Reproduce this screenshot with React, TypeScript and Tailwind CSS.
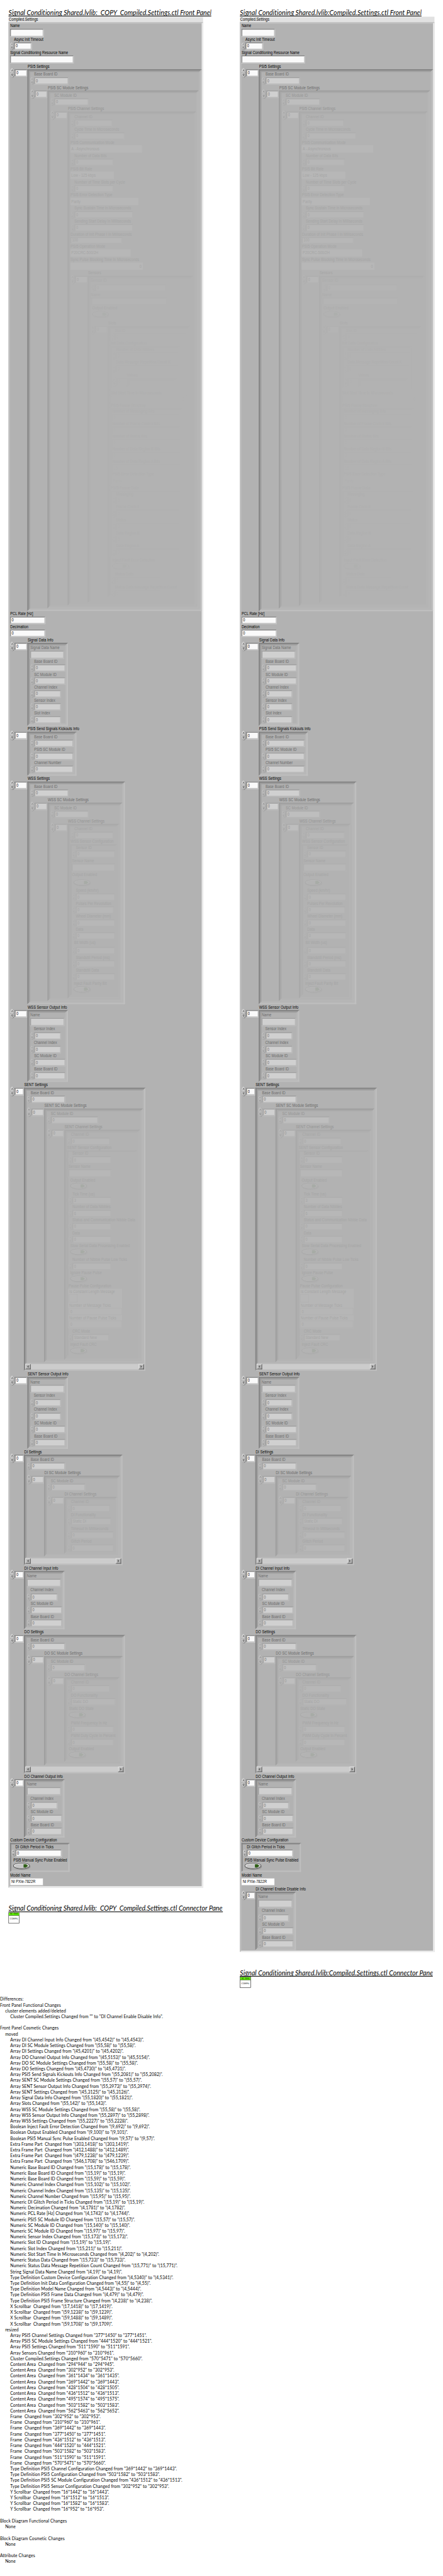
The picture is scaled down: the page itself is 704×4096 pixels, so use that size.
import React from "react";

type Kind = "num" | "plain" | "str" | "ring" | "flat" | "check" | "bool" | "array" | "cluster" | "group" | "model";

interface Item {
  kind: Kind;
  label: string;
  /** vertical position of the control's own box; its caption sits above it */
  top: number;
  h: number;
  w: number;
  /** left inset of the control inside its parent */
  x: number;
  /** left inset of the caption */
  lx: number;
  captionH: number;
  value?: string;
  right?: boolean;
  indexW?: number;
  scroll?: boolean;
  kids?: Item[];
}

type Extra = Partial<Item>;

const base = (kind: Kind, label: string, top: number, h: number, w: number, extra: Extra): Item => ({
  kind, label, top, h, w, x: 0, lx: 1, captionH: 16, ...extra,
});
const num = (label: string, top: number, w: number, extra: Extra = {}) =>
  base("num", label, top, 22, w, { value: "0", lx: (extra.x ?? 0) + 12, ...extra });
const plain = (label: string, top: number, w: number, extra: Extra = {}) =>
  base("plain", label, top, 22, w, { value: "0", ...extra });
const str = (label: string, top: number, w: number, extra: Extra = {}) => base("str", label, top, 24, w, extra);
const ring = (label: string, top: number, w: number, value: string, extra: Extra = {}) =>
  base("ring", label, top, 22, w, { value, ...extra });
const bool = (label: string, top: number, x: number, extra: Extra = {}) =>
  base("bool", label, top, 22, 52, { x, lx: x + 1, ...extra });
const array = (label: string, top: number, w: number, h: number, kids: Item[], extra: Extra = {}) =>
  base("array", label, top, h, w, { indexW: 37, lx: 52, kids, ...extra });
const cluster = (label: string, top: number, w: number, h: number, kids: Item[], extra: Extra = {}) =>
  base("cluster", label, top, h, w, { kids, ...extra });

const narrow: Extra = { indexW: 27, lx: 42 };

const slots = (): Item[] => [
  num("Slot ID", 977, 211),
  cluster("Init Data Configuration", 1015, 202, 125, [
    num("Number of Data Nibbles", 1033, 183),
    num("Data Message Repetition Count K", 1071, 183),
    array("Values", 1109, 146, 26, [], { indexW: 30, lx: 44 }),
  ]),
  plain("Slot Start Time In Microseconds", 1160, 222, { right: true }),
  cluster("PSI5 Frame Structure", 1197, 210, 226, [
    plain("Number of Messaging Bits", 1214, 200),
    plain("Number of Frame Control Bits", 1251, 200),
    plain("Number of Status Bits", 1288, 200),
    plain("Number of Data Region B Bits", 1325, 200),
    plain("Number of Data Region A Bits", 1362, 200, { value: "10" }),
    ring("PSI5 Error Detection Type", 1399, 200, "Parity"),
  ]),
  cluster("PSI5 Frame Data", 1439, 206, 195, [
    num("Messaging", 1457, 188),
    num("Frame Control", 1495, 188),
    num("Status", 1533, 188),
    num("Data Region B", 1571, 188),
    num("Data Region A", 1609, 188),
  ]),
  bool("Inject Fault Error Detection", 1651, 4),
  num("Status Data", 1692, 136),
  num("Status Data Message Repetition Count", 1730, 136),
];

const psi5 = (grow: number) =>
  array("PSI5 Settings", 203, 511, 1589 + grow, [
    num("Base Board ID", 226, 102),
    array("PSI5 SC Module Settings", 265, 443, 1519 + grow, [
      num("SC Module ID", 288, 102),
      array("PSI5 Channel Settings", 327, 376, 1449 + grow, [
        num("Channel ID", 350, 113),
        num("Cycle Time in Microseconds", 388, 149),
        ring("PSI5 Communication Mode", 426, 210, "A - Asynchronous"),
        num("Number of Data Bits", 465, 116),
        ring("PSI5 Bit Rate", 503, 128, "Low - 125 kbps"),
        num("Number of Time Slots per Cycle", 542, 116),
        ring("PSI5 Error Detection Type", 580, 200, "Parity"),
        num("Sync Sustain Time in Microseconds", 619, 173),
        num("Sending Start Delay In Milliseconds", 657, 173),
        plain("Duration of Init Phase I In Milliseconds", 695, 153, { value: "100", h: 20 }),
        ring("PSI5 Operation Mode", 731, 177, "P20CRC-500/2H"),
        ring("Sync Pulse Blocking Time In Microseconds", 770, 213, "0", { right: true }),
        array("Sensors", 809, 308, 959 + grow, [
          num("Sensor ID", 833, 209, { x: 2, lx: 1, captionH: 18 }),
          str("Name", 872, 222, { x: 2, h: 22 }),
          bool("Output Enabled", 912, 4),
          array("Slots", 956, 241, 795 + grow, slots()),
        ]),
      ]),
    ]),
  ]);

const sensorInfo = (label: string, t: number) =>
  array(label, t, 119, 211, [
    str("Name", t + 23, 101),
    num("Sensor Index", t + 65, 80, { captionH: 18, lx: 11 }),
    num("Channel Index", t + 105, 80, { captionH: 18, lx: 11 }),
    num("SC Module ID", t + 143, 93),
    num("Base Board ID", t + 182, 93),
  ]);

const channelInfo = (label: string, t: number) =>
  array(label, t, 119, 171, [
    str("Name", t + 23, 101),
    num("Channel Index", t + 66, 80, { captionH: 18, lx: 11 }),
    num("SC Module ID", t + 104, 93),
    num("Base Board ID", t + 142, 93),
  ], narrow);

const panelItems = (grow: number): Item[] => [
  str("Name", 84, 99),
  num("Async Init Timeout", 124, 53),
  str("Signal Conditioning Resource Name", 162, 187),
  psi5(grow),
  plain("PCL Rate [Hz]", 1808, 104),
  plain("Decimation", 1846, 104),
  array("Signal Data Info", 1885, 119, 244, [
    str("Signal Data Name", 1908, 100),
    num("Base Board ID", 1948, 93),
    num("SC Module ID", 1986, 93),
    num("Channel Index", 2024, 80),
    num("Sensor Index", 2062, 80),
    num("Slot Index", 2100, 80),
  ]),
  array("PSI5 Send Signals Kickouts Info", 2146, 144, 129, [
    num("Base Board ID", 2169, 116),
    num("PSI5 SC Module ID", 2207, 116),
    num("Channel Number", 2245, 116),
  ]),
  array("WSS Settings", 2292, 286, 653, [
    num("Base Board ID", 2315, 102),
    array("WSS SC Module Settings", 2354, 219, 582, [
      num("SC Module ID", 2377, 102),
      array("WSS Channel Settings", 2416, 151, 512, [
        num("Channel ID", 2439, 116),
        cluster("WSS Sensor Configuration", 2476, 136, 444, [
          num("Sensor ID", 2494, 116),
          str("Sensor Name", 2532, 127),
          bool("Output Enabled", 2579, 5, { captionH: 22, lx: 1 }),
          num("Speed (km/hr)", 2620, 116),
          num("Pulses Per Revolution", 2658, 113),
          num("Wheel Diameter (mm)", 2696, 116),
          num("Data", 2734, 116),
          num("Bit Width (us)", 2777, 116, { captionH: 21, lx: 7 }),
          num("Standstill Period (ms)", 2816, 116),
          num("Standstill Data", 2854, 116),
          bool("Inject Fault Parity Bit", 2892, 5),
        ]),
      ]),
    ]),
  ]),
  sensorInfo("WSS Sensor Output Info", 2962),
  array("SENT Settings", 3190, 356, 830, [
    num("Base Board ID", 3213, 102),
    array("SENT SC Module Settings", 3251, 290, 744, [
      num("SC Module ID", 3274, 140),
      array("SENT Channel Settings", 3313, 222, 675, [
        num("Channel ID", 3336, 116),
        cluster("SENT Sensor Configuration", 3374, 205, 604, [
          num("Sensor ID", 3391, 116),
          str("Sensor Name", 3429, 127),
          bool("Output Enabled", 3469, 5),
          num("Tick Time (us)", 3510, 116, { value: "3" }),
          num("Number of Data Nibbles", 3548, 116, { value: "6" }),
          num("Status and Communication Nibble Data", 3586, 116),
          num("Data", 3624, 116),
          bool("Slow Serial Data Processing Enabled", 3662, 5),
          num("Number of Nibble Pulse Low Ticks", 3703, 116),
          bool("Ignore Pause Pulse", 3741, 5),
          base("group", "Pause Pulse Configuration", 3780, 115, 158, {
            kids: [
              base("check", "Is Constant Length Message", 3796, 24, 25, {}),
              base("flat", "Number of Message Ticks", 3836, 21, 155, { value: "0" }),
              base("flat", "Number of Pause Pulse Ticks", 3873, 21, 155, { value: "0" }),
            ],
          }),
          num("CRC Mode", 3912, 109, { value: "Standard New" }),
          bool("Inject Fault CRC", 3952, 5),
        ]),
      ]),
    ]),
  ], { ...narrow, scroll: true }),
  sensorInfo("SENT Sensor Output Info", 4038),
  array("DI Settings", 4266, 289, 324, [
    num("Base Board ID", 4289, 102),
    array("DI SC Module Settings", 4328, 222, 237, [
      num("SC Module ID", 4351, 102),
      array("DI Channel Settings", 4390, 155, 167, [
        num("Channel ID", 4413, 116),
        num("DI Functionality", 4451, 120, { value: "Static DI" }),
        num("Timeout In Milliseconds", 4491, 127),
        num("Glitch Period", 4529, 127),
      ]),
    ]),
  ], { ...narrow, scroll: true }),
  channelInfo("DI Channel Input Info", 4607),
  array("DO Settings", 4795, 296, 406, [
    num("Base Board ID", 4818, 102),
    array("DO SC Module Settings", 4857, 230, 321, [
      num("SC Module ID", 4880, 102),
      array("DO Channel Settings", 4919, 162, 248, [
        num("Channel ID", 4942, 116),
        num("DO Functionality", 4980, 132, { value: "Static DO" }),
        bool("Static DO State", 5020, 5),
        num("PWM Frequency In Hz", 5061, 127),
        num("PWM Duty Cycle In Percent", 5099, 127),
        bool("Output Enabled", 5137, 5),
      ]),
    ]),
  ], { ...narrow, scroll: true }),
  channelInfo("DO Channel Output Info", 5218),
  cluster("Custom Device Configuration", 5405, 175, 85, [
    num("DI Glitch Period in Ticks", 5424, 137),
    bool("PSI5 Manual Sync Pulse Enabled", 5463, 5),
  ]),
  base("model", "Model Name", 5508, 22, 98, { value: "NI PXIe-7822R" }),
];

const bevel = "border-3 border-t-[#868686] border-l-[#8c8c8c] border-r-[#bfbfbf] border-b-[#c1c1c1]";
const frame = "border-4 border-t-[#858585] border-l-[#858585] border-r-[#bfbfbf] border-b-[#bfbfbf]";

function Caption({ text }: { text: string }) {
  return (
    <span className="block h-4 w-max origin-left scale-x-[0.842] text-[12.5px] leading-4 whitespace-pre">{text}</span>
  );
}

function Spinner({ w, h }: { w: number; h: number }) {
  return (
    <svg width={w} height={h} viewBox="0 0 14 28" preserveAspectRatio="none" className="shrink-0">
      <ellipse cx="7.5" cy="14.5" rx="6.3" ry="13.2" fill="#6e6e6e" />
      <ellipse cx="6.6" cy="13.6" rx="6.2" ry="13.2" fill="#c6c6c6" />
      <ellipse cx="5.6" cy="11" rx="3.8" ry="8.5" fill="#d6d6d6" />
      <path d="M0.8 13.8H12.8" stroke="#8a8a8a" strokeWidth="1.2" />
      <path d="M4.4 10.5L6.8 5L9.2 10.5" fill="none" stroke="#555555" strokeWidth="1.3" />
      <path d="M4.4 17.5H9.2L6.8 23Z" fill="none" stroke="#555555" strokeWidth="1.3" />
    </svg>
  );
}

function Toggle() {
  return (
    <svg width="52" height="22" viewBox="0 0 52 22">
      <ellipse cx="27.5" cy="12" rx="24" ry="9" fill="#8b8b8b" opacity="0.7" />
      <ellipse cx="25" cy="9.2" rx="24.5" ry="9" fill="#4a4a4a" />
      <ellipse cx="25" cy="9" rx="22.8" ry="7.4" fill="#d9d9d9" />
      <ellipse cx="26" cy="10" rx="20" ry="5.8" fill="#c6c6c6" />
      <path d="M31 4.5H38L44 9.2L38 14H31Z" fill="#2f5f17" />
    </svg>
  );
}

function Field({ item, h, w }: { item: { value?: string; right?: boolean }; h: number; w: number }) {
  return (
    <div style={{ width: w, height: h }} className={`flex shrink-0 items-center bg-[#fafafa] ${bevel} ${item.right ? "justify-end" : ""}`}>
      {item.value && <span className="px-[2px]"><Caption text={item.value} /></span>}
    </div>
  );
}

function ScrollBar() {
  return (
    <div className="flex h-4 w-full justify-between bg-[#cccccc]">
      <div className="flex h-4 w-4 items-center justify-center border-2 border-t-[#e4e4e4] border-r-[#5c5c5c] border-b-[#5c5c5c] border-l-[#e4e4e4] bg-[#b8b8b8]">
        <svg width="6" height="8"><path d="M5 0V8L0.5 4Z" fill="#5f5f5f" /></svg>
      </div>
      <div className="flex h-4 w-4 items-center justify-center border-2 border-t-[#e4e4e4] border-r-[#5c5c5c] border-b-[#5c5c5c] border-l-[#e4e4e4] bg-[#b8b8b8]">
        <svg width="6" height="8"><path d="M1 0V8L5.5 4Z" fill="#5f5f5f" /></svg>
      </div>
    </div>
  );
}

function Control({ item }: { item: Item }) {
  const { kind, w, h, kids = [] } = item;
  if (kind === "num") {
    return (
      <div className="flex">
        <Spinner w={12} h={22} />
        <Field item={item} h={h} w={w - 1} />
      </div>
    );
  }
  if (kind === "plain" || kind === "str") return <Field item={item} h={h} w={w} />;
  if (kind === "ring") {
    return (
      <div style={{ width: w, height: h }} className={`flex items-center bg-[#fafafa] px-[3px] ${item.right ? "justify-end" : ""}`}>
        <Caption text={item.value ?? ""} />
      </div>
    );
  }
  if (kind === "model") {
    return (
      <div style={{ width: w, height: h }} className="flex items-center border border-[#999999] bg-white px-[3px]">
        <Caption text={item.value ?? ""} />
      </div>
    );
  }
  if (kind === "flat" || kind === "check") {
    return (
      <div style={{ width: w, height: h }} className="flex items-center border border-[#7a7a7a] px-[3px]">
        <Caption text={item.value ?? ""} />
      </div>
    );
  }
  if (kind === "bool") return <Toggle />;
  if (kind === "cluster") {
    return (
      <div style={{ width: w, height: h }} className={frame}>
        <Stack items={kids} from={item.top + 4} />
      </div>
    );
  }
  if (kind === "group") {
    return (
      <div style={{ width: w, height: h }} className="bg-[#f6f6f6] pl-[2px]">
        <Stack items={kids} from={item.top} />
      </div>
    );
  }
  return (
    <div style={{ height: h }} className="flex items-start">
      <div className="-mt-1 flex items-start">
        <Spinner w={14} h={29} />
        <div className="pt-1">
          <Field item={{ value: "0" }} h={22} w={item.indexW ?? 37} />
        </div>
      </div>
      <div style={{ width: w, height: h }} className={`flex flex-col ${frame}`}>
        <div className={`min-h-0 flex-1 opacity-[0.42] ${frame}`}>
          <Stack items={kids} from={item.top + 8} />
        </div>
        {item.scroll && <ScrollBar />}
      </div>
    </div>
  );
}

/** Column of captioned controls; the gaps follow from the controls' vertical positions. */
function Stack({ items, from }: { items: Item[]; from: number }) {
  let end = from;
  return (
    <div className="flex flex-col items-start">
      {items.map((item, i) => {
        const gap = item.top - item.captionH - end;
        end = item.top + item.h;
        return (
          <div key={i} style={{ marginTop: gap, height: item.captionH + item.h }} className="flex flex-col items-start">
            <div style={{ height: item.captionH, paddingLeft: item.lx }}>
              <Caption text={item.label} />
            </div>
            <div style={{ paddingLeft: item.x }}>
              <Control item={item} />
            </div>
          </div>
        );
      })}
    </div>
  );
}

function Title({ text, w, spacing }: { text: string; w: number; spacing: number }) {
  return (
    <h2
      style={{ width: w, letterSpacing: spacing }}
      className="h-[23px] overflow-hidden border-b-2 border-black font-['Lato',sans-serif] text-[19.5px] leading-[24px] whitespace-pre italic"
    >
      {text}
    </h2>
  );
}

function Panel({ items, h }: { items: Item[]; h: number }) {
  return (
    <section className="mt-px w-[570px]">
      <div className="h-4 bg-[#e1e1e1] pl-px">
        <Caption text="Compiled.Settings" />
      </div>
      <div
        style={{ height: h }}
        className="overflow-hidden border-4 border-t-[#c4c4c4] border-r-[#efefef] border-b-[#efefef] border-l-[#c0c0c0] bg-[#b2b2b2]"
      >
        <Stack items={items} from={69} />
      </div>
    </section>
  );
}

function ViIcon() {
  return (
    <div className="mt-px flex h-8 w-8 flex-col border border-black bg-white text-center font-['DejaVu_Sans',sans-serif] text-[6.5px] tracking-tight whitespace-nowrap">
      <div className="h-2 border-b border-black bg-[#66ff00] leading-[7px]">SC SHA</div>
      <div className="flex flex-1 items-center justify-center">COMPIL</div>
    </div>
  );
}

const T = "\t";
const report = `Differences:
Front Panel Functional Changes
${T}cluster elements added/deleted
${T}${T}Cluster Compiled.Settings Changed from "" to "DI Channel Enable Disable Info".

Front Panel Cosmetic Changes
${T}moved
${T}${T}Array DI Channel Input Info Changed from "(45,4542)" to "(45,4543)".
${T}${T}Array DI SC Module Settings Changed from "(55,58)" to "(55,58)".
${T}${T}Array DI Settings Changed from "(45,4201)" to "(45,4202)".
${T}${T}Array DO Channel Output Info Changed from "(45,5153)" to "(45,5154)".
${T}${T}Array DO SC Module Settings Changed from "(55,58)" to "(55,58)".
${T}${T}Array DO Settings Changed from "(45,4730)" to "(45,4731)".
${T}${T}Array PSI5 Send Signals Kickouts Info Changed from "(55,2081)" to "(55,2082)".
${T}${T}Array SENT SC Module Settings Changed from "(55,57)" to "(55,57)".
${T}${T}Array SENT Sensor Output Info Changed from "(55,3973)" to "(55,3974)".
${T}${T}Array SENT Settings Changed from "(45,3125)" to "(45,3126)".
${T}${T}Array Signal Data Info Changed from "(55,1820)" to "(55,1821)".
${T}${T}Array Slots Changed from "(55,142)" to "(55,143)".
${T}${T}Array WSS SC Module Settings Changed from "(55,58)" to "(55,58)".
${T}${T}Array WSS Sensor Output Info Changed from "(55,2897)" to "(55,2898)".
${T}${T}Array WSS Settings Changed from "(55,2227)" to "(55,2228)".
${T}${T}Boolean Inject Fault Error Detection Changed from "(9,692)" to "(9,692)".
${T}${T}Boolean Output Enabled Changed from "(9,100)" to "(9,101)".
${T}${T}Boolean PSI5 Manual Sync Pulse Enabled Changed from "(9,57)" to "(9,57)".
${T}${T}Extra Frame Part  Changed from "(303,1418)" to "(303,1419)".
${T}${T}Extra Frame Part  Changed from "(412,1488)" to "(412,1489)".
${T}${T}Extra Frame Part  Changed from "(479,1238)" to "(479,1239)".
${T}${T}Extra Frame Part  Changed from "(546,1708)" to "(546,1709)".
${T}${T}Numeric Base Board ID Changed from "(15,178)" to "(15,178)".
${T}${T}Numeric Base Board ID Changed from "(15,19)" to "(15,19)".
${T}${T}Numeric Base Board ID Changed from "(15,59)" to "(15,59)".
${T}${T}Numeric Channel Index Changed from "(15,102)" to "(15,102)".
${T}${T}Numeric Channel Index Changed from "(15,135)" to "(15,135)".
${T}${T}Numeric Channel Number Changed from "(15,95)" to "(15,95)".
${T}${T}Numeric DI Glitch Period in Ticks Changed from "(15,19)" to "(15,19)".
${T}${T}Numeric Decimation Changed from "(4,1781)" to "(4,1782)".
${T}${T}Numeric PCL Rate [Hz] Changed from "(4,1743)" to "(4,1744)".
${T}${T}Numeric PSI5 SC Module ID Changed from "(15,57)" to "(15,57)".
${T}${T}Numeric SC Module ID Changed from "(15,140)" to "(15,140)".
${T}${T}Numeric SC Module ID Changed from "(15,97)" to "(15,97)".
${T}${T}Numeric Sensor Index Changed from "(15,173)" to "(15,173)".
${T}${T}Numeric Slot ID Changed from "(15,19)" to "(15,19)".
${T}${T}Numeric Slot Index Changed from "(15,211)" to "(15,211)".
${T}${T}Numeric Slot Start Time In Microseconds Changed from "(4,202)" to "(4,202)".
${T}${T}Numeric Status Data Changed from "(15,733)" to "(15,733)".
${T}${T}Numeric Status Data Message Repetition Count Changed from "(15,771)" to "(15,771)".
${T}${T}String Signal Data Name Changed from "(4,19)" to "(4,19)".
${T}${T}Type Definition Custom Device Configuration Changed from "(4,5340)" to "(4,5341)".
${T}${T}Type Definition Init Data Configuration Changed from "(4,55)" to "(4,55)".
${T}${T}Type Definition Model Name Changed from "(4,5443)" to "(4,5444)".
${T}${T}Type Definition PSI5 Frame Data Changed from "(4,479)" to "(4,479)".
${T}${T}Type Definition PSI5 Frame Structure Changed from "(4,238)" to "(4,238)".
${T}${T}X Scrollbar  Changed from "(17,1418)" to "(17,1419)".
${T}${T}X Scrollbar  Changed from "(59,1238)" to "(59,1239)".
${T}${T}X Scrollbar  Changed from "(59,1488)" to "(59,1489)".
${T}${T}X Scrollbar  Changed from "(59,1708)" to "(59,1709)".
${T}resized
${T}${T}Array PSI5 Channel Settings Changed from "377*1450" to "377*1451".
${T}${T}Array PSI5 SC Module Settings Changed from "444*1520" to "444*1521".
${T}${T}Array PSI5 Settings Changed from "511*1590" to "511*1591".
${T}${T}Array Sensors Changed from "310*960" to "310*961".
${T}${T}Cluster Compiled.Settings Changed from "570*5471" to "570*5660".
${T}${T}Content Area  Changed from "294*944" to "294*945".
${T}${T}Content Area  Changed from "302*952" to "302*953".
${T}${T}Content Area  Changed from "361*1434" to "361*1435".
${T}${T}Content Area  Changed from "369*1442" to "369*1443".
${T}${T}Content Area  Changed from "428*1504" to "428*1505".
${T}${T}Content Area  Changed from "436*1512" to "436*1513".
${T}${T}Content Area  Changed from "495*1574" to "495*1575".
${T}${T}Content Area  Changed from "503*1582" to "503*1583".
${T}${T}Content Area  Changed from "562*5463" to "562*5652".
${T}${T}Frame  Changed from "302*952" to "302*953".
${T}${T}Frame  Changed from "310*960" to "310*961".
${T}${T}Frame  Changed from "369*1442" to "369*1443".
${T}${T}Frame  Changed from "377*1450" to "377*1451".
${T}${T}Frame  Changed from "436*1512" to "436*1513".
${T}${T}Frame  Changed from "444*1520" to "444*1521".
${T}${T}Frame  Changed from "503*1582" to "503*1583".
${T}${T}Frame  Changed from "511*1590" to "511*1591".
${T}${T}Frame  Changed from "570*5471" to "570*5660".
${T}${T}Type Definition PSI5 Channel Configuration Changed from "369*1442" to "369*1443".
${T}${T}Type Definition PSI5 Configuration Changed from "503*1582" to "503*1583".
${T}${T}Type Definition PSI5 SC Module Configuration Changed from "436*1512" to "436*1513".
${T}${T}Type Definition PSI5 Sensor Configuration Changed from "302*952" to "302*953".
${T}${T}Y Scrollbar  Changed from "16*1442" to "16*1443".
${T}${T}Y Scrollbar  Changed from "16*1512" to "16*1513".
${T}${T}Y Scrollbar  Changed from "16*1582" to "16*1583".
${T}${T}Y Scrollbar  Changed from "16*952" to "16*953".

Block Diagram Functional Changes
${T}None

Block Diagram Cosmetic Changes
${T}None

Attribute Changes
${T}None`;

function Report() {
  return (
    <div className="font-['Lato',sans-serif] text-[12.5px] leading-[17px] tracking-[0.18px]">
      {report.split("\n").map((line, i) => {
        const text = line.replace(/^\t+/, "");
        const depth = line.length - text.length;
        return (
          <p key={i} style={{ paddingLeft: depth * 15 }} className="h-[17px] whitespace-pre">
            {text}
          </p>
        );
      })}
    </div>
  );
}

export default function App() {
  return (
    <main className="h-[4096px] w-[704px] overflow-hidden bg-white">
      <div className="flex h-[7555px] w-[1298px] origin-top-left flex-col bg-white font-['Liberation_Sans',sans-serif] text-black [transform:scale(0.54237,0.54216)]">
        <div className="flex h-[5855px] shrink-0 pt-[25px] pl-[25px]">
          <div className="w-[678px] shrink-0">
            <Title text="Signal Conditioning Shared.lvlib:  COPY  Compiled.Settings.ctl Front Panel" w={594} spacing={0.04} />
            <Panel items={panelItems(0)} h={5471} />
            <div className="h-[49px]" />
            <Title text="Signal Conditioning Shared.lvlib:  COPY  Compiled.Settings.ctl Connector Pane" w={628} spacing={0} />
            <ViIcon />
          </div>
          <div className="shrink-0">
            <Title text="Signal Conditioning Shared.lvlib:Compiled.Settings.ctl Front Panel" w={532} spacing={0.1} />
            <Panel items={[...panelItems(1), channelInfo("DI Channel Enable Disable Info", 5548)]} h={5660} />
            <div className="h-[49px]" />
            <Title text="Signal Conditioning Shared.lvlib:Compiled.Settings.ctl Connector Pane" w={565} spacing={0.05} />
            <ViIcon />
          </div>
        </div>
        <Report />
      </div>
    </main>
  );
}
